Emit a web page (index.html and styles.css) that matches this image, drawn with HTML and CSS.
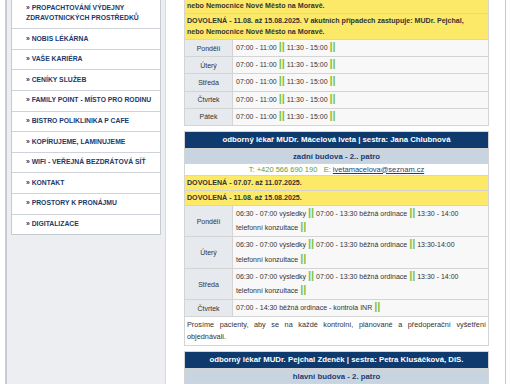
FILE: index.html
```html
<!DOCTYPE html>
<html lang="cs">
<head>
    <meta charset="UTF-8">
    <meta name="viewport" content="width=device-width, initial-scale=1.0">
    <title>Ordinační hodiny</title>
    <link rel="stylesheet" href="styles.css">
</head>
<body>
    <div class="page">
        <aside class="sidebar">
            <ul class="menu">
                <li><a href="#">» Propachtování výdejny zdravotnických prostředků</a></li>
                <li><a href="#">» Nobis lékárna</a></li>
                <li><a href="#">» Vaše kariéra</a></li>
                <li><a href="#">» Ceníky služeb</a></li>
                <li><a href="#">» Family point - místo pro rodinu</a></li>
                <li><a href="#">» Bistro poliklinika P cafe</a></li>
                <li><a href="#">» Kopírujeme, laminujeme</a></li>
                <li><a href="#">» WiFi - veřejná bezdrátová síť</a></li>
                <li><a href="#">» Kontakt</a></li>
                <li><a href="#">» Prostory k pronájmu</a></li>
                <li><a href="#">» Digitalizace</a></li>
            </ul>
        </aside>

        <main class="content">
            <table class="hours">
                <tr><td colspan="2" class="notice">DOVOLENÁ - 07.07. až 11.07.2025. V akutních případech zastupuje: MUDr. Pejchal,<br>nebo Nemocnice Nové Město na Moravě.</td></tr>
                <tr><td colspan="2" class="notice">DOVOLENÁ - 11.08. až 15.08.2025. V akutních případech zastupuje: MUDr. Pejchal,<br>nebo Nemocnice Nové Město na Moravě.</td></tr>
                <tr><td class="day">Pondělí</td><td class="time">07:00 - 11:00 <span class="sep">||</span> 11:30 - 15:00 <span class="sep">||</span></td></tr>
                <tr><td class="day">Úterý</td><td class="time">07:00 - 11:00 <span class="sep">||</span> 11:30 - 15:00 <span class="sep">||</span></td></tr>
                <tr><td class="day">Středa</td><td class="time">07:00 - 11:00 <span class="sep">||</span> 11:30 - 15:00 <span class="sep">||</span></td></tr>
                <tr><td class="day">Čtvrtek</td><td class="time">07:00 - 11:00 <span class="sep">||</span> 11:30 - 15:00 <span class="sep">||</span></td></tr>
                <tr><td class="day">Pátek</td><td class="time">07:00 - 11:00 <span class="sep">||</span> 11:30 - 15:00 <span class="sep">||</span></td></tr>
            </table>

            <table class="hours">
                <tr><th colspan="2" class="doctor">odborný lékař MUDr. Mácelová Iveta | sestra: Jana Chlubnová</th></tr>
                <tr><td colspan="2" class="place">zadní budova - 2.. patro</td></tr>
                <tr><td colspan="2" class="contact">T: +420 566 690 190 &nbsp; E: <a href="#">ivetamacelova@seznam.cz</a></td></tr>
                <tr><td colspan="2" class="notice">DOVOLENÁ - 07.07. až 11.07.2025.</td></tr>
                <tr><td colspan="2" class="notice">DOVOLENÁ - 11.08. až 15.08.2025.</td></tr>
                <tr><td class="day">Pondělí</td><td class="time">06:30 - 07:00 výsledky <span class="sep">||</span> 07:00 - 13:30 běžná ordinace <span class="sep">||</span> 13:30 - 14:00 telefonní konzultace <span class="sep">||</span></td></tr>
                <tr><td class="day">Úterý</td><td class="time">06:30 - 07:00 výsledky <span class="sep">||</span> 07:00 - 13:30 běžná ordinace <span class="sep">||</span> 13:30-14:00 telefonní konzultace <span class="sep">||</span></td></tr>
                <tr><td class="day">Středa</td><td class="time">06:30 - 07:00 výsledky <span class="sep">||</span> 07:00 - 13:30 běžná ordinace <span class="sep">||</span> 13:30 - 14:00 telefonní konzultace <span class="sep">||</span></td></tr>
                <tr><td class="day">Čtvrtek</td><td class="time">07:00 - 14:30 běžná ordinace - kontrola INR <span class="sep">||</span></td></tr>
                <tr><td colspan="2" class="note">Prosíme pacienty, aby se na každé kontrolní, plánované a předoperační vyšetření objednávali.</td></tr>
            </table>

            <table class="hours">
                <tr><th colspan="2" class="doctor">odborný lékař MUDr. Pejchal Zdeněk | sestra: Petra Klusáčková, DiS.</th></tr>
                <tr><td colspan="2" class="place">hlavní budova - 2. patro</td></tr>
                <tr><td colspan="2" class="contact">T: +420 566 690 191 &nbsp; E: <a href="#">pejchal@seznam.cz</a></td></tr>
            </table>
        </main>

        <div class="right-col"></div>
    </div>
</body>
</html>
```

FILE: styles.css
```css
body {
    margin: 0;
    font-family: "Liberation Sans", Arial, sans-serif;
    background: #ffffff;
    color: #333333;
    overflow: hidden;
}

.page {
    display: flex;
    padding-left: 5px;
    height: 384px;
}

/* left menu */
.sidebar {
    width: 150px;
    padding: 0 4px;
    background: #eceef2;
    border-left: 2px solid #c9ccd2;
    border-right: 1px solid #d6d9de;
}

.menu {
    list-style: none;
    margin: -3px 0 0;
    padding: 0;
    background: #ffffff;
    border: 1px solid #c6cad1;
}

.menu li + li {
    border-top: 1px solid #cfd3d9;
}

.menu a {
    display: block;
    padding: 4.5px 6px 4.5px 14px;
    line-height: 10.6px;
    font-size: 6.8px;
    font-weight: bold;
    color: #22386b;
    text-decoration: none;
    text-transform: uppercase;
}

/* tables with office hours */
.content {
    width: 305px;
    margin: -13px 0 0 18px;
}

.hours {
    width: 100%;
    border-collapse: collapse;
    border: 1px solid #cfcfcf;
    margin-bottom: 5px;
    font-size: 7px;
}

.hours td, .hours th {
    border: 1px solid #d4d4d4;
}

.doctor {
    background: #0f3a6e;
    color: #ffffff;
    font-size: 7.8px;
    font-weight: bold;
    line-height: 12px;
    padding: 2px;
    text-align: center;
}

.place {
    background: #c8d4e0;
    color: #1c3a6b;
    font-size: 7.8px;
    font-weight: bold;
    line-height: 11px;
    padding: 1.5px;
    text-align: center;
}

.contact {
    background: #ffffff;
    color: #5f9e34;
    font-size: 7.5px;
    line-height: 10px;
    padding: 0.5px;
    text-align: center;
}

.contact a {
    color: #1f3d7a;
}

.notice {
    background: #fde968;
    color: #333333;
    font-size: 7.1px;
    font-weight: bold;
    line-height: 11px;
    padding: 1.5px 2px;
}

.day {
    width: 43px;
    background: #e6e9ee;
    text-align: center;
    padding: 1px 2px;
}

.time {
    background: #f8f8f8;
    line-height: 14.2px;
    padding: 1px 8px 1px 3px;
}

.sep {
    color: #7cc242;
    font-weight: bold;
    font-size: 11px;
    line-height: 10px;
}

.note {
    background: #ffffff;
    font-size: 7.3px;
    line-height: 12px;
    padding: 2px;
    text-align: justify;
}

.right-col {
    flex: 1;
    margin-left: 16px;
    border-left: 1px solid #c8c8c8;
}
```
